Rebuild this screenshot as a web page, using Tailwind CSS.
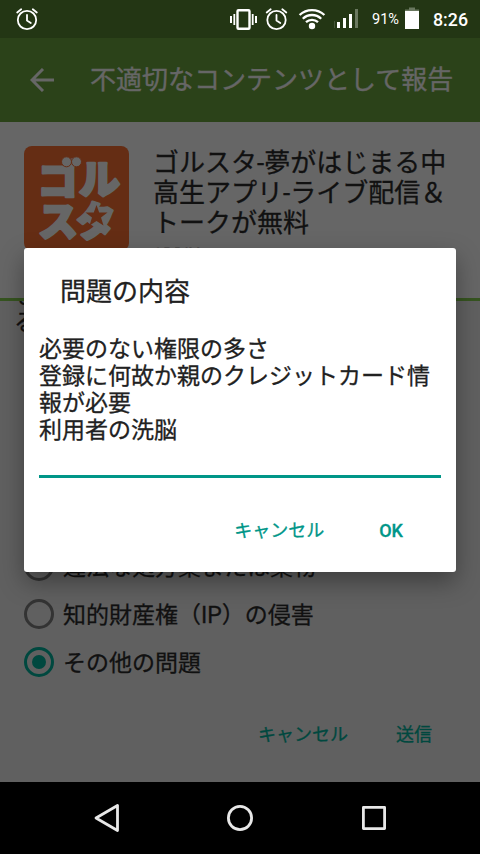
<!DOCTYPE html>
<html lang="ja">
<head>
<meta charset="utf-8">
<title>不適切なコンテンツとして報告</title>
<script src="https://cdn.jsdelivr.net/npm/@tailwindcss/browser@4"></script>
</head>
<body class="bg-black">
<div class="relative w-[480px] h-[854px] overflow-hidden flex flex-col font-['Roboto','Noto_Sans_CJK_JP',sans-serif] text-[#111]">
  <header class="h-[38px] shrink-0 bg-[#233614] text-white">
    <svg class="block" width="480" height="38" viewBox="0 0 480 38" fill="none" stroke="#fff">
      <defs>
        <g id="alarm" stroke-width="1.8" stroke-linecap="round"><circle cx="0" cy="0" r="9.2"/><path d="M0-5V.5L3.8 3M-9.8-7.5L-5.8-10.8M9.8-7.5L5.8-10.8"/></g>
      </defs>
      <use href="#alarm" x="27" y="20"/>
      <rect x="237.5" y="10.3" width="12" height="18.4" rx="1" stroke-width="2.4"/>
      <path d="M231 16v7M256 16v7" stroke-width="2"/><path d="M234.3 14v11M252.7 14v11" stroke-width="1.8"/>
      <use href="#alarm" x="276.5" y="20"/>
      <g stroke-width="2.3"><path d="M299.6 15A18 18 0 0 1 324.4 15M302.8 18.8A13 13 0 0 1 321.2 18.8M306 22.2A8.7 8.7 0 0 1 318 22.2"/></g>
      <circle cx="312" cy="26" r="3.2" fill="#fff" stroke="none"/>
      <path d="M338.5 28v-6M344.5 28V18M350.5 28V14" stroke-width="3"/><path d="M356.5 28V9" stroke="#6a785f" stroke-width="3"/>
      <path d="M334.5 28v-7" stroke="#45563a" stroke-width="1"/>
      <path d="M409 7.5h6v2h4v2h-14v-2h4z" fill="#6a785f" stroke="none"/><path d="M405 11h14v18h-14z" fill="#fff" stroke="none"/>
      <g fill="#fff" stroke="none"><text x="372" y="24" font-size="14.5" textLength="27" lengthAdjust="spacingAndGlyphs">91%</text><text x="433" y="26" font-size="18" font-weight="500" textLength="35" lengthAdjust="spacingAndGlyphs">8:26</text></g>
    </svg>
  </header>
  <div class="h-[84px] shrink-0 bg-[#2b4219] text-[#666] flex items-center pl-[30px]">
    <svg width="24" height="24" viewBox="0 0 24 24" fill="none" stroke="#666" stroke-width="3"><path d="M24 12H2M13 1L2 12l11 11"/></svg>
    <h1 class="ml-[36px] text-[26px] leading-[30px] whitespace-nowrap [-webkit-text-stroke:0.4px]">不適切なコンテンツとして報告</h1>
  </div>
  <main class="h-[660px] shrink-0 bg-[#606060] flex flex-col overflow-hidden [-webkit-text-stroke:0.3px]">
    <section class="h-[179px] shrink-0 bg-[#666] border-b-[3px] border-[#365420] pt-[24px] pl-[24px] flex items-start gap-[24px]">
      <svg width="105" height="105" viewBox="0 0 105 105" class="shrink-0" font-family="'Noto Sans CJK JP',sans-serif" font-weight="900">
        <rect width="105" height="105" rx="8" fill="#652d14"/>
        <g fill="#666" stroke="#666" stroke-width="2.5" stroke-linejoin="round" class="[-webkit-text-stroke:3px_#666]">
          <text x="14" y="48" font-size="40" textLength="82" lengthAdjust="spacingAndGlyphs">ゴル</text>
          <text x="14" y="90" font-size="40" textLength="78">スタ</text>
        </g>
        <g fill="#666" stroke="#652d14"><circle cx="42.500" cy="15.800" r="5"/><circle cx="52.500" cy="15.800" r="5"/></g>
        <path d="M72.500 59l2.700 7.500h8.300l-6.500 5 2.500 8-7-4.500-7 4.500 2.500-8-6.500-5h8.300z" fill="#652d14"/>
      </svg>
      <div class="pt-[2px]">
        <h2 class="text-[26px] leading-[30px] whitespace-nowrap">ゴルスタ-夢がはじまる中<br>高生アプリ-ライブ配信＆<br>トークが無料</h2>
        <p class="text-[17px] leading-[22px] mt-[5px]">SPRIX</p>
      </div>
    </section>
    <div class="h-[54px] shrink-0 overflow-hidden pl-[14px] text-[23px] leading-[27px]"><p class="-mt-[19px]">し<br>る</p></div>
    <ul class="mt-[187px] text-[23px] leading-[27px]">
      <li class="h-[48px] flex items-center pl-6 gap-[9px] whitespace-nowrap"><span class="size-[30px] rounded-full border-[3px] border-[#333]"></span><span class="mt-[2px]">違法な処方薬または薬物</span></li>
      <li class="h-[48px] flex items-center pl-6 gap-[9px] whitespace-nowrap"><span class="size-[30px] rounded-full border-[3px] border-[#333]"></span><span class="mt-[2px]">知的財産権（IP）の侵害</span></li>
      <li class="h-[48px] flex items-center pl-6 gap-[9px] whitespace-nowrap"><span class="size-[30px] rounded-full border-[3px] border-[#00483f] flex items-center justify-center"><i class="size-[14px] rounded-full bg-[#00483f]"></i></span><span class="mt-[2px]">その他の問題</span></li>
    </ul>
    <div class="mt-[35px] flex justify-end gap-[48px] pr-[48px] text-[18px] leading-[27px] text-[#00483f]"><span>キャンセル</span><span>送信</span></div>
  </main>
  <nav class="h-[72px] shrink-0 bg-black">
    <svg class="block" width="480" height="72" fill="none" stroke="#e8e8e8" stroke-width="2.800" stroke-linejoin="round"><path d="M117.500 23.500v25L96 36z"/><circle cx="240" cy="36" r="11.600"/><rect x="363.400" y="25.400" width="21.200" height="21.200"/></svg>
  </nav>

  <div class="absolute left-[24px] top-[248px] w-[432px] h-[324px] rounded-[3px] bg-white text-[#212121] shadow-[0_10px_24px_rgba(0,0,0,0.35)] flex flex-col [-webkit-text-stroke:0.3px]">
    <h3 class="pl-[36px] pt-[29px] text-[26px] leading-[30px]">問題の内容</h3>
    <p class="mx-[15px] mt-[29px] h-[142px] border-b-[3px] border-[#009688] text-[23px] leading-[27px] whitespace-nowrap">必要のない権限の多さ<br>登録に何故か親のクレジットカード情<br>報が必要<br>利用者の洗脳</p>
    <div class="mt-[39px] flex justify-end gap-[55px] pr-[53px] text-[18px] leading-[28px] text-[#009688]"><span>キャンセル</span><span class="font-medium">OK</span></div>
  </div>
</div>
</body>
</html>
